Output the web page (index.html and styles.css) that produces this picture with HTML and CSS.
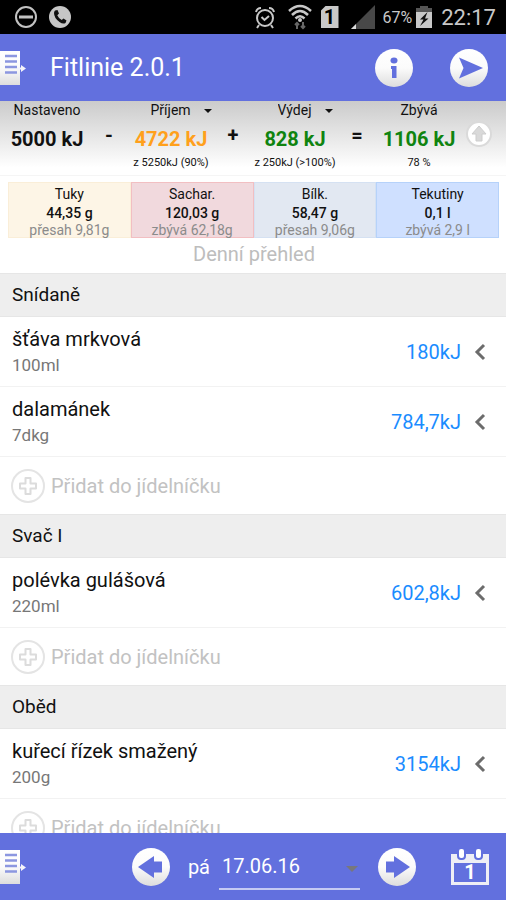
FILE: index.html
```html
<!DOCTYPE html>
<html lang="cs">
<head>
<meta charset="utf-8">
<meta name="viewport" content="width=device-width, initial-scale=1">
<title>Fitlinie 2.0.1</title>
<link rel="stylesheet" href="styles.css">
</head>
<body>
<svg class="defs" aria-hidden="true">
  <defs>
    <linearGradient id="metal" x1="0" y1="0" x2="0" y2="1"><stop offset="0" stop-color="#fff"/><stop offset=".5" stop-color="#fbfbfb"/><stop offset="1" stop-color="#ddd"/></linearGradient>
    <symbol id="menu" viewBox="0 0 27 36">
      <path d="M0 1H20V35H0z" fill="url(#metal)"/>
      <path d="M5 6H17M5 11.500H17M5 17H17M5 22.500H17" stroke="#8c97e0" stroke-width="2.500"/>
      <path d="M17 17.500H21V15L26 18.500L21 22V19.500H17z" fill="#f4f4fa"/>
    </symbol>
    <symbol id="plus" viewBox="0 0 34 34">
      <circle cx="17" cy="17" r="16" fill="none" stroke="#e4e4e4" stroke-width="2"/>
      <path d="M14.500 9h5v5.500h5.500v5h-5.500v5.500h-5v-5.500h-5.500v-5h5.500z" fill="none" stroke="#dcdcdc" stroke-width="2" stroke-linejoin="round"/>
    </symbol>
    <symbol id="chevron" viewBox="0 0 12 18"><path d="M10 2L3 9L10 16" fill="none" stroke="#6c6c6c" stroke-width="3"/></symbol>
  </defs>
</svg>

<div class="status">
  <svg width="22" height="22" viewBox="0 0 22 22"><circle cx="11" cy="11" r="10" fill="none" stroke="#c2c2c2" stroke-width="2"/><path d="M4 11H18" stroke="#c2c2c2" stroke-width="3"/></svg>
  <svg class="call" width="22" height="22" viewBox="0 0 22 22"><circle cx="11" cy="11" r="11" fill="#c6c6c6"/><path d="M6 4.500L8.500 4L10 7.500L8.300 9.200Q9.500 12.200 12.700 14L14.500 12.500L17.500 14.500L16.500 17Q14 18.500 10.500 16Q5 12 5 7Q5 5.500 6 4.500z" fill="#111"/></svg>
  <svg class="push" width="22" height="24" viewBox="0 0 22 24"><g fill="none" stroke="#c8c8c8" stroke-width="2"><circle cx="11" cy="13" r="8"/><path d="M7.500 12L10.500 15L15 11M2 7Q3 3 7 3M20 7Q19 3 15 3M5 20L3 23M17 20L19 23"/></g></svg>
  <svg class="wifi" width="24" height="26" viewBox="0 0 24 26"><g fill="none" stroke="#c8c8c8" stroke-width="2.500"><path d="M1 7Q12 -3 23 7M4 11Q12 3 20 11M7.500 14.500Q12 10 16.500 14.500"/></g><circle cx="12" cy="16" r="2" fill="#c8c8c8"/><path d="M9 25V19M7 21L9 19L11 21M15 18V24M13 22L15 24L17 22" fill="none" stroke="#666" stroke-width="2"/></svg>
  <span class="sim">1</span>
  <svg class="signal" width="24" height="24" viewBox="0 0 24 24"><path d="M24 0V24H0z" fill="#484848"/><path d="M5 19V24H0z" fill="#ddd"/></svg>
  <span class="percent">67%</span>
  <svg class="battery" width="16" height="22" viewBox="0 0 16 22"><path d="M4 0H12V2H16V8H0V2H4z" fill="#555"/><path d="M0 6H16V22H0z" fill="#c8c8c8"/><path d="M11.500 6L4 13.500H7.500L4 20L12.500 12.500H9z" fill="#111"/></svg>
  <span class="clock">22:17</span>
</div>

<header class="bar">
  <button class="icon-button" aria-label="Menu"><svg width="27" height="36"><use href="#menu"/></svg></button>
  <h1>Fitlinie 2.0.1</h1>
  <button class="icon-button push" aria-label="Informace"><svg width="38" height="38" viewBox="0 0 38 38"><circle cx="19" cy="19" r="19" fill="url(#metal)"/><ellipse cx="19" cy="11.500" rx="3.500" ry="3" fill="#6270de"/><path d="M16 17H21.500V29H17V20H16z" fill="#6270de"/></svg></button>
  <button class="icon-button send" aria-label="Odeslat"><svg width="38" height="38" viewBox="0 0 38 38"><circle cx="19" cy="19" r="19" fill="url(#metal)"/><path d="M9 8.500L33 19L9 29.500L13.500 19z" fill="#6270de"/></svg></button>
</header>

<section class="summary">
  <div class="total"><span>Nastaveno</span><strong>5000 kJ</strong></div>
  <b class="operator">-</b>
  <div class="total eaten"><span class="pick"><select aria-label="Příjem"><option>Příjem</option></select></span><strong>4722 kJ</strong><small>z 5250kJ (90%)</small></div>
  <b class="operator">+</b>
  <div class="total good"><span class="pick"><select aria-label="Výdej"><option>Výdej</option></select></span><strong>828 kJ</strong><small>z 250kJ (&gt;100%)</small></div>
  <b class="operator">=</b>
  <div class="total good"><span>Zbývá</span><strong>1106 kJ</strong><small>78 %</small></div>
  <button class="icon-button collapse" aria-label="Sbalit"><svg width="26" height="26" viewBox="0 0 26 26"><circle cx="13" cy="13" r="12" fill="#fff" stroke="#dadada" stroke-width="2"/><path d="M13 5L20 13H16V20H10V13H6z" fill="#d9d9d9" stroke="#cdcdcd"/></svg></button>
</section>

<section class="nutrients">
  <div class="nutrient fat"><span>Tuky</span><b>44,35 g</b><small>přesah 9,81g</small></div>
  <div class="nutrient carbs"><span>Sachar.</span><b>120,03 g</b><small>zbývá 62,18g</small></div>
  <div class="nutrient protein"><span>Bílk.</span><b>58,47 g</b><small>přesah 9,06g</small></div>
  <div class="nutrient fluids"><span>Tekutiny</span><b>0,1 l</b><small>zbývá 2,9 l</small></div>
</section>
<a class="overview" href="#">Denní přehled</a>

<main class="meals">
  <h2>Snídaně</h2>
  <a class="food" href="#"><span class="name">šťáva mrkvová<small>100ml</small></span><span class="energy">180kJ</span><svg width="12" height="18"><use href="#chevron"/></svg></a>
  <a class="food" href="#"><span class="name">dalamánek<small>7dkg</small></span><span class="energy">784,7kJ</span><svg width="12" height="18"><use href="#chevron"/></svg></a>
  <button class="add"><svg width="34" height="34"><use href="#plus"/></svg>Přidat do jídelníčku</button>
  <h2>Svač I</h2>
  <a class="food" href="#"><span class="name">polévka gulášová<small>220ml</small></span><span class="energy">602,8kJ</span><svg width="12" height="18"><use href="#chevron"/></svg></a>
  <button class="add"><svg width="34" height="34"><use href="#plus"/></svg>Přidat do jídelníčku</button>
  <h2>Oběd</h2>
  <a class="food" href="#"><span class="name">kuřecí řízek smažený<small>200g</small></span><span class="energy">3154kJ</span><svg width="12" height="18"><use href="#chevron"/></svg></a>
  <button class="add"><svg width="34" height="34"><use href="#plus"/></svg>Přidat do jídelníčku</button>
</main>

<footer class="bar">
  <button class="icon-button" aria-label="Menu"><svg width="27" height="36"><use href="#menu"/></svg></button>
  <button class="icon-button push" aria-label="Předchozí den"><svg width="38" height="38" viewBox="0 0 38 38"><circle cx="19" cy="19" r="19" fill="url(#metal)"/><path d="M6 19L22 8V13.500H30V24.500H22V30z" fill="#6270de"/></svg></button>
  <label class="weekday" for="date">pá</label>
  <span class="date"><select id="date"><option>17.06.16</option></select></span>
  <button class="icon-button next" aria-label="Další den"><svg width="38" height="38" viewBox="0 0 38 38"><circle cx="19" cy="19" r="19" fill="url(#metal)"/><path d="M32 19L16 8V13.500H8V24.500H16V30z" fill="#6270de"/></svg></button>
  <button class="icon-button calendar" aria-label="Kalendář"><svg width="40" height="38" viewBox="0 0 40 38"><path d="M1 6H39V37H1zM4 15V34H36V15z" fill="#eeeef5" fill-rule="evenodd"/><g fill="#fff" stroke="#6270de" stroke-width="2"><rect x="8" y="0" width="7" height="11" rx="3"/><rect x="25" y="0" width="7" height="11" rx="3"/></g></svg><span>1</span></button>
</footer>
</body>
</html>
```
FILE: styles.css
```css
* { box-sizing: border-box; }

body {
  margin: 0;
  height: 100vh;
  display: flex;
  flex-direction: column;
  overflow: hidden;
  background: #fff;
  color: #111;
  font-family: Roboto, "Liberation Sans", sans-serif;
}

button, select {
  appearance: none;
  border: 0;
  padding: 0;
  background: none;
  color: inherit;
  font: inherit;
}

a { color: inherit; text-decoration: none; }
svg { display: block; flex: none; }
.defs { position: absolute; width: 0; height: 0; }
.push { margin-left: auto; }

.status {
  flex: none;
  display: flex;
  align-items: center;
  height: 34px;
  padding: 0 10px 0 15px;
  background: #000;
  color: #c8c8c8;
}
.call { margin-left: 12px; }
.wifi { margin-left: 12px; }
.sim {
  width: 18px;
  margin-left: 9px;
  background: #c8c8c8;
  clip-path: polygon(5px 0, 100% 0, 100% 100%, 0 100%, 0 5px);
  color: #000;
  font-size: 20px;
  font-weight: 700;
  line-height: 22px;
  text-align: center;
}
.signal { margin-left: 12px; }
.percent { margin-left: 8px; font-size: 16px; }
.battery { margin-left: 4px; }
.clock { margin-left: 9px; font-size: 22px; }

.bar {
  flex: none;
  display: flex;
  align-items: center;
  height: 67px;
  background: #6270de;
  color: #fff;
}
.bar h1 {
  margin: 0 0 0 23px;
  font-size: 25px;
  font-weight: 400;
}
.icon-button { position: relative; flex: none; cursor: pointer; }
.send { margin: 0 18px 0 37px; }

.summary {
  flex: none;
  display: grid;
  grid-template-columns: 94fr 30fr 94fr 30fr 94fr 30fr 94fr 26fr 14fr;
  height: 75px;
  background: linear-gradient(#cbcbcb, #fff 90%);
  border-bottom: 1px solid #f5f5f5;
}
.total {
  display: flex;
  flex-direction: column;
  align-items: center;
  font-size: 14px;
  line-height: 18px;
  white-space: nowrap;
}
.total strong { font-size: 20px; line-height: 40px; }
.total small { font-size: 11px; line-height: 8px; }
.eaten strong { color: #ffa01c; }
.good strong { color: #108410; }
.operator {
  font-size: 20px;
  line-height: 68px;
  text-align: center;
}
.pick { position: relative; }
.pick select { display: block; }
.pick::after, .date::after {
  content: "";
  position: absolute;
  top: 8px;
  right: -20px;
  border: 4px solid transparent;
  border-top-color: #111;
  border-bottom: 0;
  pointer-events: none;
}
.collapse { align-self: start; margin-top: 20px; }

.nutrients {
  flex: none;
  display: grid;
  grid-template-columns: repeat(4, 1fr);
  margin: 6px 7px 0 8px;
}
.nutrient {
  display: flex;
  flex-direction: column;
  align-items: center;
  height: 56px;
  padding-top: 2px;
  border: 1px solid;
  font-size: 14px;
  line-height: 18px;
}
.nutrient b { font-weight: 500; line-height: 20px; }
.nutrient small { font-size: 14px; line-height: 15px; color: #8b8b8b; }
.fat { background: #fdf5e6; border-color: #faeed8; }
.carbs { background: #f1d9dd; border-color: #f2bfc2; }
.protein { background: #e2e8f2; border-color: #d5e1f2; }
.fluids { background: #cfe0ff; border-color: #b6d2fa; }

.overview {
  flex: none;
  height: 35px;
  padding-left: 2px;
  color: #bdbdbd;
  font-size: 20px;
  line-height: 33px;
  text-align: center;
}

.meals {
  flex: 1;
  min-height: 0;
  overflow-y: auto;
  scrollbar-width: none;
}
.meals h2 {
  height: 44px;
  margin: 0;
  padding-left: 12px;
  border: 1px solid #e6e6e6;
  border-width: 1px 0;
  background: #eee;
  font-size: 19px;
  font-weight: 400;
  line-height: 42px;
}
.food {
  display: flex;
  align-items: center;
  height: 70px;
  padding: 1px 20px 0 12px;
  border-bottom: 1px solid #f2f2f2;
}
.name { flex: 1; font-size: 20px; line-height: 27px; }
.name small { display: block; color: #777; font-size: 17px; line-height: 25px; }
.energy { margin-right: 13px; color: #1a8cff; font-size: 20px; }
.add {
  display: flex;
  align-items: center;
  gap: 6px;
  width: 100%;
  height: 57px;
  padding-left: 11px;
  color: #c2c2c2;
  font-size: 20px;
}

.weekday { margin-left: 18px; font-size: 20px; }
.date {
  position: relative;
  width: 141px;
  margin-left: 9px;
  border-bottom: 2px solid #c5caf3;
}
.date select { display: block; width: 100%; height: 44px; padding-left: 3px; font-size: 20px; }
.date::after { top: 22px; right: 2px; border-width: 6px 6px 0; border-top-color: #77777c; }
.next { margin-left: 18px; }
.calendar { margin: 0 16px 0 34px; }
.calendar span {
  position: absolute;
  inset: 14px 0 0;
  font-size: 20px;
  font-weight: 700;
  line-height: 20px;
  text-align: center;
}
```
